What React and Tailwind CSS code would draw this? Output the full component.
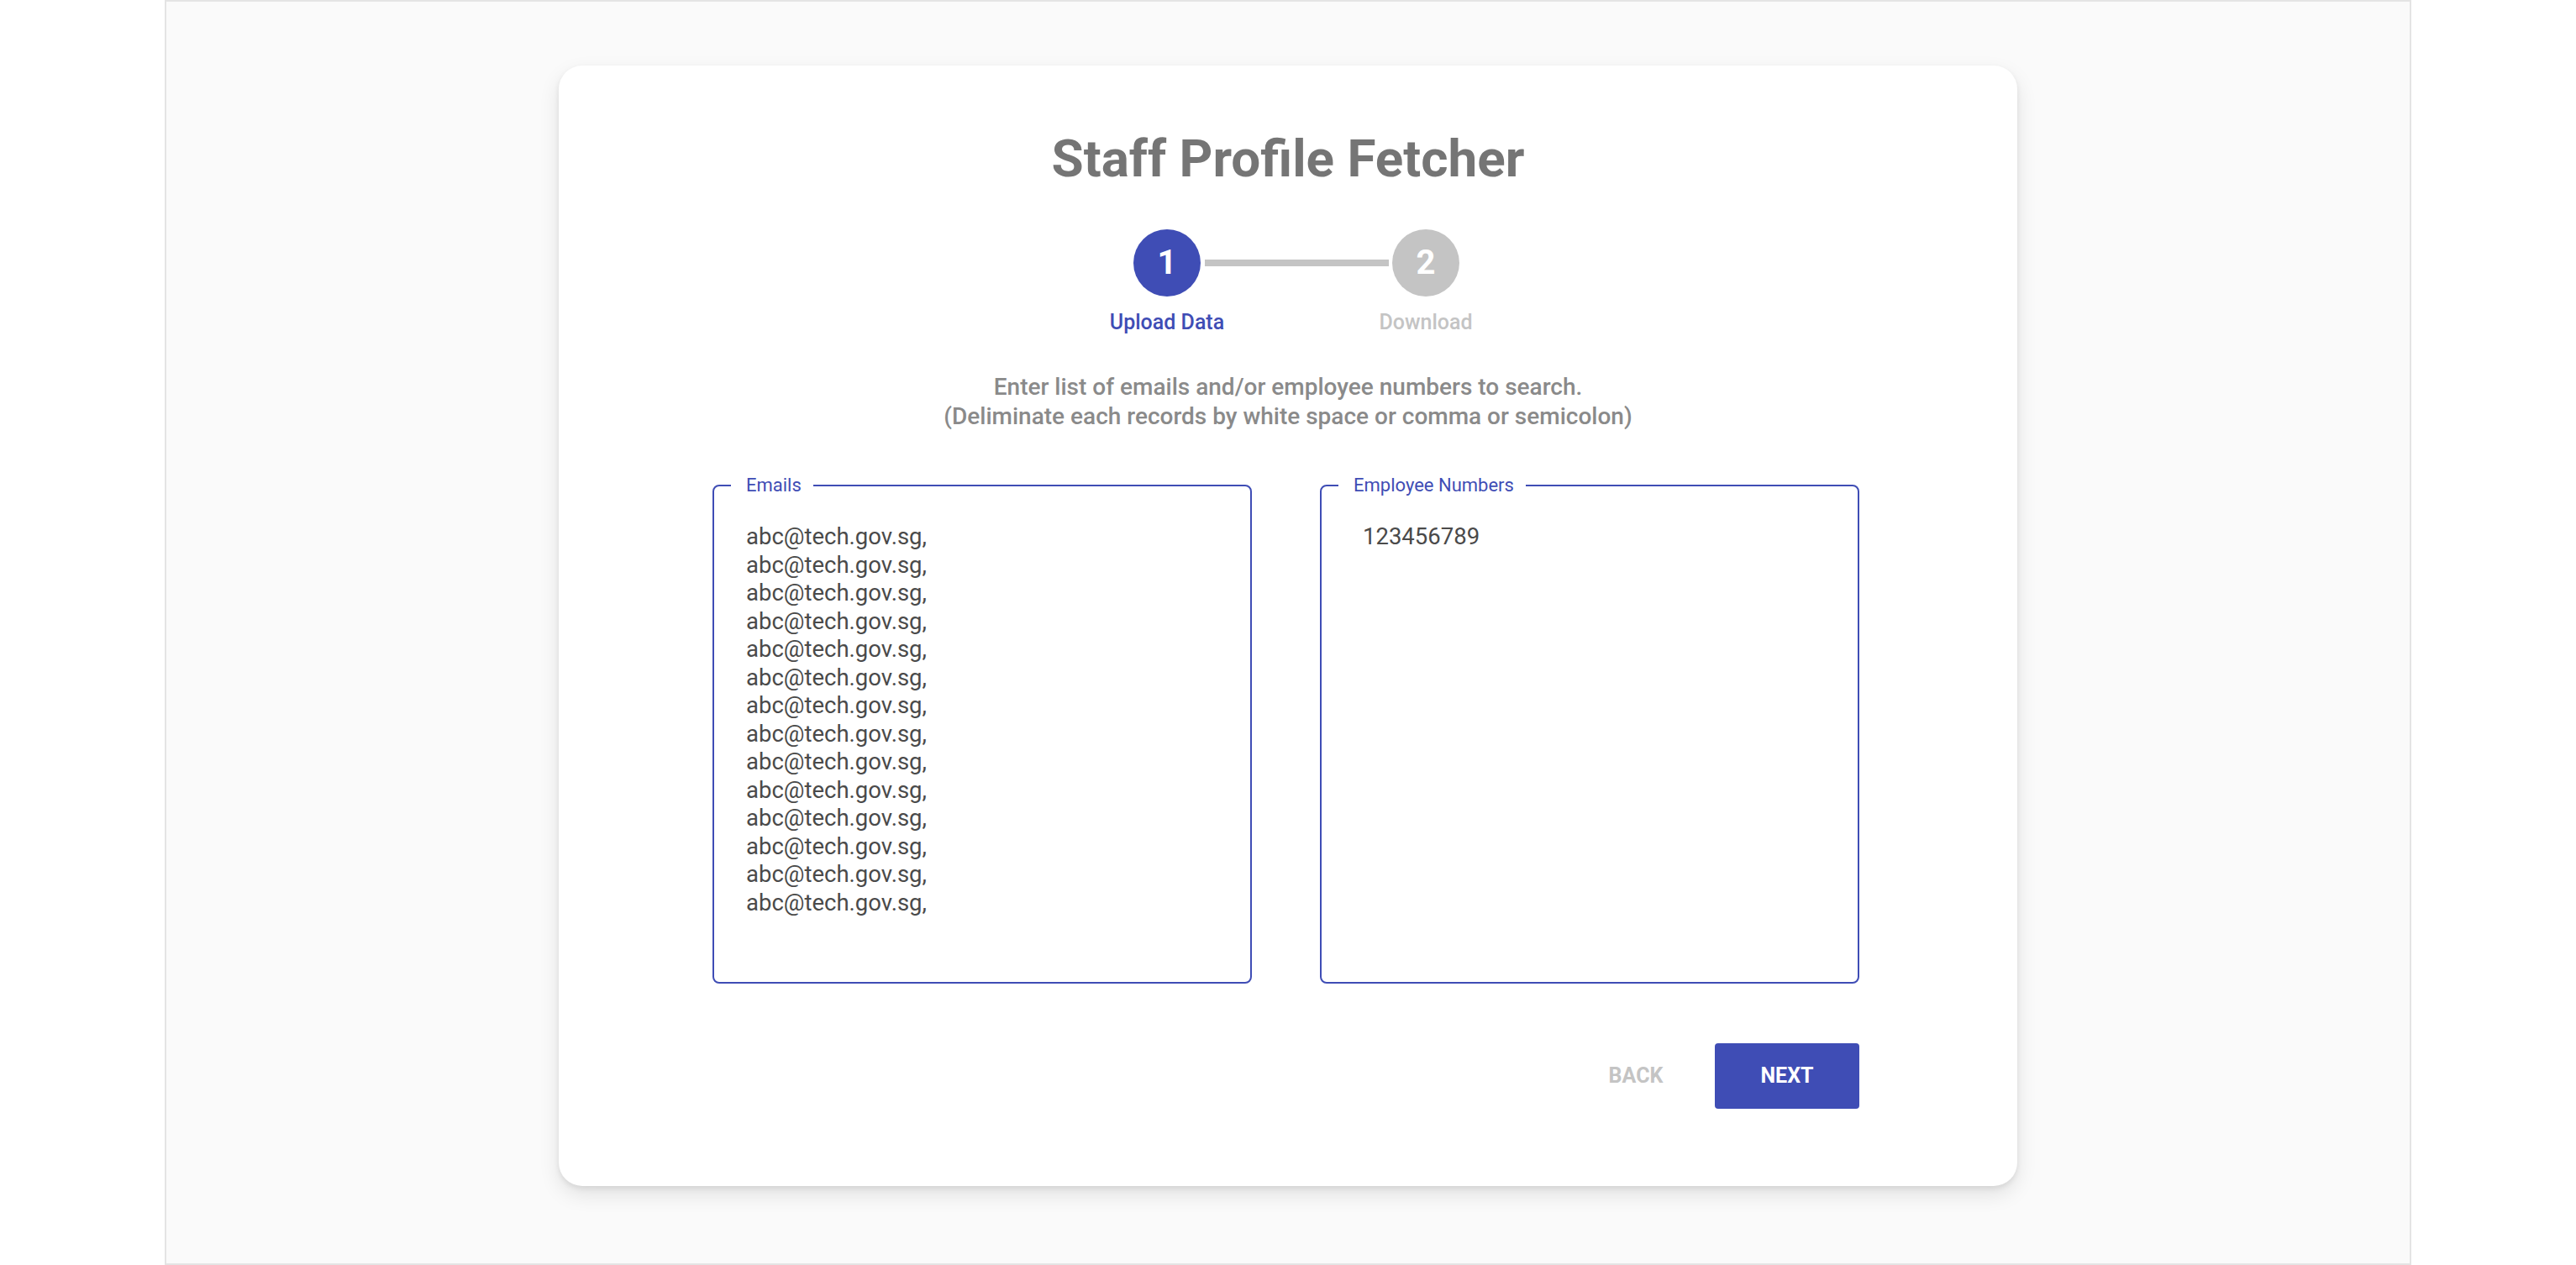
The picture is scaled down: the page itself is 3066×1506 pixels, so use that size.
import React, { useState } from "react";

const Field = ({ label, value, onChange, padClass }) => {
  return (
    <div
      className={`relative h-[594px] w-[642px] rounded-[8px] border-2 border-[#3f4db5] pt-[43px] ${padClass}`}
    >
      <span className="absolute -top-[14px] left-[20px] bg-white pl-[18px] pr-[14px] text-[22px] leading-[26px] text-[#3f4db5]">
        {label}
      </span>
      <textarea
        value={value}
        onChange={onChange}
        className="h-full w-full resize-none overflow-hidden bg-transparent text-[27.5px] leading-[33.5px] text-[#4a4a4a] outline-none"
      />
    </div>
  );
};

const Stepper = () => {
  return (
    <div className="mt-[53px] flex justify-center pl-[20px]">
      <div className="flex w-[140px] flex-col items-center">
        <div className="flex h-[80px] w-[80px] items-center justify-center rounded-full bg-[#3f4db5] text-[40px] leading-none font-bold text-white">
          1
        </div>
        <span className="mt-[16px] text-[25px] leading-[30px] font-medium text-[#3f4db5]">
          Upload Data
        </span>
      </div>
      {/* connector between the two steps */}
      <div className="relative z-0 mt-[36px] -mr-[26px] -ml-[25px] h-[8px] w-[219px] bg-[#c4c4c4]" />
      <div className="flex w-[140px] flex-col items-center">
        <div className="flex h-[80px] w-[80px] items-center justify-center rounded-full bg-[#c4c4c4] text-[40px] leading-none font-bold text-white">
          2
        </div>
        <span className="mt-[16px] text-[25px] leading-[30px] font-medium text-[#c4c4c4]">
          Download
        </span>
      </div>
    </div>
  );
};

const App = () => {
  const [emails, setEmails] = useState(
    Array(14).fill("abc@tech.gov.sg,").join("\n")
  );
  const [employeeNos, setEmployeeNos] = useState("123456789");

  return (
    <div className="min-h-screen bg-white font-[Roboto,sans-serif]">
      <div className="mx-auto h-[1506px] w-[2674px] border-2 border-[#e4e4e4] bg-[#fafafa] pt-[76px]">
        <div className="mx-auto w-[1736px] rounded-[28px] bg-white pt-[80px] pb-[92px] shadow-[0_3px_6px_rgba(0,0,0,0.08),0_10px_24px_rgba(0,0,0,0.1)]">
          <h1 className="text-center text-[62px] leading-[62px] font-bold text-[#757575]">
            Staff Profile Fetcher
          </h1>

          <Stepper />

          <p className="mt-[44px] text-center text-[28px] leading-[35px] font-medium text-[#8a8a8a]">
            Enter list of emails and/or employee numbers to search.
            <br />
            (Deliminate each records by white space or comma or semicolon)
          </p>

          <div className="mt-[64px] ml-[183px] w-[1365px]">
            <div className="flex gap-[81px]">
              <Field
                label="Emails"
                value={emails}
                onChange={(e) => setEmails(e.target.value)}
                padClass="pl-[38px] pr-[20px]"
              />
              <Field
                label="Employee Numbers"
                value={employeeNos}
                onChange={(e) => setEmployeeNos(e.target.value)}
                padClass="pl-[49px] pr-[20px]"
              />
            </div>

            <div className="mt-[71px] flex items-center justify-end gap-[34px]">
              <button
                type="button"
                disabled
                className="h-[78px] w-[120px] text-[25px] font-bold text-[#c4c4c4] uppercase"
              >
                Back
              </button>
              <button
                type="button"
                className="h-[78px] w-[172px] rounded-[4px] bg-[#3f4db5] text-[25px] font-bold text-white uppercase"
              >
                Next
              </button>
            </div>
          </div>
        </div>
      </div>
    </div>
  );
};

export default App;
